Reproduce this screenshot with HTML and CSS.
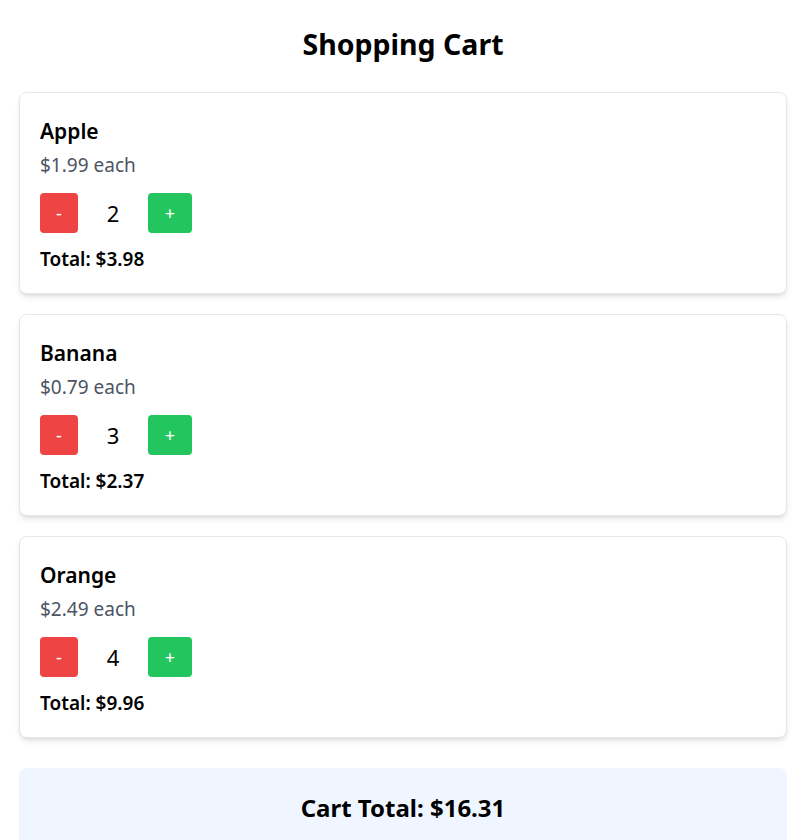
FILE: index.html
```html
<!DOCTYPE html>
<html lang="en">
<head>
<meta charset="utf-8">
<title>Shopping Cart</title>
<link rel="stylesheet" href="styles.css">
</head>
<body>
<div class="page">
  <h1 class="title">Shopping Cart</h1>
  <div class="list">
    <div class="card">
      <h3 class="name">Apple</h3>
      <p class="price">$1.99 each</p>
      <div class="controls">
        <button class="btn btn-minus">-</button>
        <span class="qty">2</span>
        <button class="btn btn-plus">+</button>
      </div>
      <p class="total">Total: $3.98</p>
    </div>
    <div class="card">
      <h3 class="name">Banana</h3>
      <p class="price">$0.79 each</p>
      <div class="controls">
        <button class="btn btn-minus">-</button>
        <span class="qty">3</span>
        <button class="btn btn-plus">+</button>
      </div>
      <p class="total">Total: $2.37</p>
    </div>
    <div class="card">
      <h3 class="name">Orange</h3>
      <p class="price">$2.49 each</p>
      <div class="controls">
        <button class="btn btn-minus">-</button>
        <span class="qty">4</span>
        <button class="btn btn-plus">+</button>
      </div>
      <p class="total">Total: $9.96</p>
    </div>
  </div>
  <div class="summary">
    <h2 class="summary-text">Cart Total: $16.31</h2>
  </div>
</div>
</body>
</html>
```

FILE: styles.css
```css
* { box-sizing: border-box; }
html, body {
  margin: 0;
  padding: 0;
  background: #ffffff;
}
body {
  font-family: "Noto Sans", "Open Sans", sans-serif;
  color: #000000;
}
.page {
  width: 768px;
  margin-left: 19px;
  padding-top: 26px;
}
.title {
  margin: 0 0 30px;
  font-size: 28.5px;
  line-height: 36px;
  font-weight: 700;
  text-align: center;
}
.list {
  display: flex;
  flex-direction: column;
  gap: 20px;
}
.card {
  border: 1px solid #e5e7eb;
  border-radius: 8px;
  padding: 20px;
  background: #ffffff;
  box-shadow: 0 4px 6px -1px rgba(0,0,0,0.1), 0 2px 4px -2px rgba(0,0,0,0.1);
}
.name {
  margin: 4px 0 6px;
  font-size: 21px;
  line-height: 28px;
  font-weight: 600;
}
.price {
  margin: 0 0 14px;
  font-size: 19px;
  line-height: 28px;
  color: #4b5563;
}
.controls {
  display: flex;
  align-items: center;
  height: 40px;
  margin-bottom: 12px;
}
.btn {
  height: 40px;
  border: none;
  border-radius: 4px;
  color: #ffffff;
  font-family: inherit;
  font-size: 18px;
  padding: 0;
  cursor: pointer;
}
.btn-minus { width: 38px; background: #ef4444; }
.btn-plus { width: 44px; background: #22c55e; }
.qty {
  width: 70px;
  text-align: center;
  font-size: 22px;
}
.total {
  margin: 0;
  font-size: 19px;
  line-height: 28px;
  font-weight: 600;
}
.summary {
  margin-top: 30px;
  background: #eff6ff;
  border-radius: 8px;
  padding: 24px;
  text-align: center;
}
.summary-text {
  margin: 0;
  font-size: 24px;
  line-height: 32px;
  font-weight: 700;
}
```
